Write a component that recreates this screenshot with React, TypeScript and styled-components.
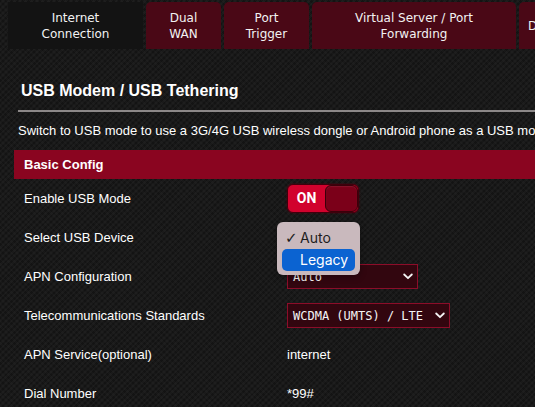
import React from 'react'
import styled, { createGlobalStyle } from 'styled-components'

const GlobalStyle = createGlobalStyle`
  html, body {
    margin: 0;
    padding: 0;
    overflow: hidden;
    background-color: #1a1a1a;
    background-image:
      repeating-linear-gradient(45deg, rgba(255,255,255,0.018) 0 2px, transparent 2px 4px),
      repeating-linear-gradient(-45deg, rgba(0,0,0,0.25) 0 2px, transparent 2px 4px);
  }
`

const Page = styled.div`
  width: 760px;
  height: 407px;
  font-family: 'Liberation Sans', Arial, sans-serif;
  color: #ffffff;
`

const TabBar = styled.div`
  display: flex;
  gap: 3px;
  padding: 2px 0 0 8px;
`

const Tab = styled.div<{ $active?: boolean; $width: number }>`
  flex: none;
  width: ${({ $width }) => $width}px;
  height: 47px;
  display: flex;
  align-items: center;
  justify-content: center;
  text-align: center;
  font-family: 'DejaVu Sans', Verdana, sans-serif;
  font-size: 12px;
  line-height: 16px;
  color: #f2f2f2;
  background: ${({ $active }) => ($active ? '#131313' : '#4a0816')};
  border-radius: ${({ $active }) => ($active ? '0' : '5px 5px 0 0')};
  box-sizing: border-box;
  padding: 0 4px;
  white-space: pre-line;
`

const Content = styled.div`
  padding-left: 14px;
`

const Title = styled.h2`
  margin: 33px 0 0 7px;
  font-size: 16px;
  line-height: 18px;
  font-weight: bold;
  color: #ffffff;
`

const Divider = styled.div`
  margin: 10px 0 0 4px;
  height: 2px;
  background: #8c8888;
`

const Description = styled.p`
  margin: 11px 0 0 4px;
  font-size: 13px;
  line-height: 15px;
  white-space: nowrap;
`

const SectionBar = styled.div`
  margin-top: 12px;
  height: 29px;
  display: flex;
  align-items: center;
  padding-left: 10px;
  background: #8a0520;
  font-size: 13px;
  font-weight: bold;
`

const Row = styled.div`
  display: grid;
  grid-template-columns: 272px 1fr;
  align-items: center;
  height: 39px;
`

const Label = styled.div`
  padding-left: 10px;
  font-size: 13px;
`

const Value = styled.div`
  position: relative;
  display: flex;
  align-items: center;
  font-size: 13px;
  padding-left: 1px;
`

const Toggle = styled.div`
  display: flex;
  width: 72px;
  height: 29px;
  margin-top: -1px;
  box-sizing: border-box;
  border-radius: 6px;
  border: 1px solid #3f000c;
  box-shadow: 0 0 2px #5a0012;
  overflow: hidden;
  background: #d1022d;
`

const ToggleOn = styled.div`
  width: 37px;
  display: flex;
  align-items: center;
  justify-content: center;
  font-size: 14px;
  font-weight: bold;
  font-family: 'Roboto', 'Liberation Sans', sans-serif;
`

const ToggleKnob = styled.div`
  flex: 1;
  background: #7b0019;
  border-radius: 6px;
  border: 1px solid #3a000a;
  box-shadow: inset 0 1px 1px rgba(255, 255, 255, 0.08);
`

const Select = styled.div<{ $width: number }>`
  width: ${({ $width }) => $width}px;
  height: 25px;
  box-sizing: border-box;
  display: flex;
  align-items: center;
  justify-content: space-between;
  padding: 0 4px 0 5px;
  background: #32060f;
  border: 1px solid #8c0d29;
  font-family: 'DejaVu Sans Mono', 'Liberation Mono', monospace;
  font-size: 12px;
  color: #f4f4f4;
`

const Chevron = () => (
  <svg width="10" height="7" viewBox="0 0 10 7">
    <path d="M1.2 1.5 L5 5.2 L8.8 1.5" fill="none" stroke="#f4f4f4" strokeWidth="1.8" strokeLinecap="round" strokeLinejoin="round" />
  </svg>
)

const Menu = styled.div`
  position: absolute;
  left: -9px;
  top: -16px;
  z-index: 2;
  width: 83px;
  box-sizing: border-box;
  padding: 5px 5px 4px;
  background: #c9b9bd;
  border-radius: 6px;
  box-shadow: 0 2px 6px rgba(0, 0, 0, 0.35);
  font-family: 'Inter', 'Liberation Sans', sans-serif;
  font-size: 14px;
`

const MenuItem = styled.div<{ $selected?: boolean }>`
  display: flex;
  align-items: center;
  height: 22px;
  padding-left: 3px;
  border-radius: 5px;
  color: ${({ $selected }) => ($selected ? '#ffffff' : '#1d1d1d')};
  background: ${({ $selected }) => ($selected ? '#0b63d1' : 'transparent')};
`

const Check = styled.span`
  display: inline-block;
  width: 15px;
  font-size: 15px;
  font-family: 'DejaVu Sans', sans-serif;
`

const tabs = [
  { label: 'Internet\nConnection', width: 135, active: true },
  { label: 'Dual\nWAN', width: 75 },
  { label: 'Port\nTrigger', width: 85 },
  { label: 'Virtual Server / Port\nForwarding', width: 204 },
  { label: 'DMZ', width: 46 }
]

export default function App() {
  return (
    <Page>
      <GlobalStyle />
      <TabBar>
        {tabs.map((t) => (
          <Tab key={t.label} $active={t.active} $width={t.width}>
            {t.label}
          </Tab>
        ))}
      </TabBar>
      <Content>
        <Title>USB Modem / USB Tethering</Title>
        <Divider />
        <Description>
          Switch to USB mode to use a 3G/4G USB wireless dongle or Android phone as a USB modem.
        </Description>
        <SectionBar>Basic Config</SectionBar>
        <Row>
          <Label>Enable USB Mode</Label>
          <Value>
            <Toggle>
              <ToggleOn>ON</ToggleOn>
              <ToggleKnob />
            </Toggle>
          </Value>
        </Row>
        <Row>
          <Label>Select USB Device</Label>
          <Value>
            <Menu>
              <MenuItem>
                <Check>✓</Check>Auto
              </MenuItem>
              <MenuItem $selected>
                <Check />Legacy
              </MenuItem>
            </Menu>
          </Value>
        </Row>
        <Row>
          <Label>APN Configuration</Label>
          <Value>
            <Select $width={131}>
              <span>Auto</span>
              <Chevron />
            </Select>
          </Value>
        </Row>
        <Row>
          <Label>Telecommunications Standards</Label>
          <Value>
            <Select $width={163}>
              <span>WCDMA (UMTS) / LTE</span>
              <Chevron />
            </Select>
          </Value>
        </Row>
        <Row>
          <Label>APN Service(optional)</Label>
          <Value>internet</Value>
        </Row>
        <Row>
          <Label>Dial Number</Label>
          <Value>*99#</Value>
        </Row>
      </Content>
    </Page>
  )
}
